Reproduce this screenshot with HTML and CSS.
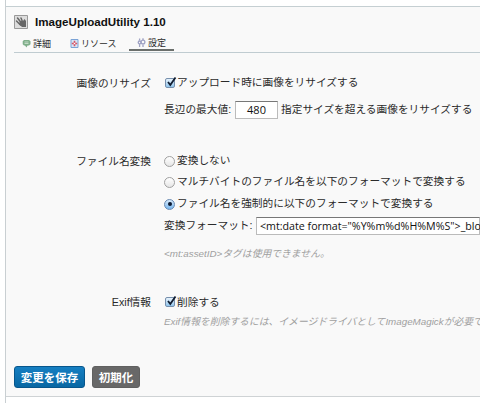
FILE: index.html
```html
<!DOCTYPE html>
<html lang="ja">
<head>
<meta charset="utf-8">
<title>ImageUploadUtility</title>
<link rel="stylesheet" href="styles.css">
</head>
<body>
<main class="list">
  <section class="plugin">
    <header class="heading">
      <svg class="plugin-icon" viewBox="0 0 14 14"><path fill="#ddd" stroke="#999" d="M.5.5h13v13H.5z"/><path fill="none" stroke="#666" stroke-width="1.5" stroke-linecap="round" d="M2.5 6l4 4M3.5 3l4 5M7 3l2 5"/><path fill="#666" d="M5 9l1-3 3 0 1.5-2L12 6v6H8z"/></svg>
      <h1>ImageUploadUtility 1.10</h1>
    </header>
    <nav class="tabs">
      <a class="tab detail"><svg class="tab-icon" viewBox="0 0 9 9"><path fill="#7fae8a" d="M2 1h5l1.5 1.2v3L7 6.5H5.5L4.5 8.5 3 6.5H2L.7 5.2v-3z"/><path stroke="#dcebdc" stroke-width=".7" d="M2.5 3h4M2.5 4.5h4"/></svg><span>詳細</span></a>
      <a class="tab resource"><svg class="tab-icon" viewBox="0 0 9 9"><path fill="#d8e6f6" stroke="#7ba3d6" d="M1 .5h7v8H1z"/><path stroke="#d65566" stroke-width="1.6" d="M1.8 4.5h5.4M4.5 1.8v5.4"/><circle cx="4.5" cy="4.5" r=".8" fill="#fff"/></svg><span>リソース</span></a>
      <a class="tab current"><svg class="tab-icon" viewBox="0 0 9 9"><g fill="none" stroke="#9fa2c4" stroke-width="1.3"><path d="M2.6 6v3M6 .2v2M6 6.5V9M2.6.5v2"/><circle cx="2.6" cy="4.4" r="1.4"/><circle cx="6" cy="4" r="1.9"/></g></svg><span>設定</span></a>
    </nav>
    <form class="settings">
      <div class="field resize">
        <div class="label">画像のリサイズ</div>
        <div class="content">
          <label class="row first"><span class="box"><svg viewBox="0 0 12 12"><path d="M3 6l2.3 3L10.5 1.5"/></svg></span><span>アップロード時に画像をリサイズする</span></label>
          <div class="row size"><span class="caption">長辺の最大値:</span><span class="input number">480</span><span>指定サイズを超える画像をリサイズする</span></div>
        </div>
      </div>
      <div class="field rename">
        <div class="label">ファイル名変換</div>
        <div class="content">
          <label class="row"><span class="radio"></span><span>変換しない</span></label>
          <label class="row"><span class="radio"></span><span>マルチバイトのファイル名を以下のフォーマットで変換する</span></label>
          <label class="row"><span class="radio on"></span><span>ファイル名を強制的に以下のフォーマットで変換する</span></label>
          <div class="row"><span class="format-caption">変換フォーマット:</span><span class="input format">&lt;mt:date format="%Y%m%d%H%M%S"&gt;_blo</span></div>
          <p class="hint">&lt;mt:assetID&gt;タグは使用できません。</p>
        </div>
      </div>
      <div class="field exif">
        <div class="label">Exif情報</div>
        <div class="content">
          <label class="row"><span class="box"><svg viewBox="0 0 12 12"><path d="M3 6l2.3 3L10.5 1.5"/></svg></span><span>削除する</span></label>
          <p class="hint">Exif情報を削除するには、イメージドライバとしてImageMagickが必要で</p>
        </div>
      </div>
      <div class="actions"><button type="button" class="save">変更を保存</button><button type="button" class="reset">初期化</button></div>
    </form>
  </section>
</main>
</body>
</html>
```
FILE: styles.css
```css
* { box-sizing: border-box; }
body {
  margin: 0;
  background: #fff;
  color: #2b2b2b;
  font: 10.7px "Liberation Sans", "Noto Sans CJK JP", sans-serif;
  overflow: hidden;
}
.list {
  height: 403px;
  margin-left: 5px;
  padding-top: 6px;
  border-left: 1px solid #c9cfd2;
  overflow: hidden;
  white-space: nowrap;
}
.plugin {
  height: 391px;
  padding-left: 8px;
  background: #f9f9f9;
  border-top: 1px solid #c5cfd2;
  border-bottom: 1px solid #cfd3d5;
}
.heading { display: flex; align-items: center; height: 29px; padding-top: 1px; }
.plugin-icon { width: 14px; height: 14px; margin-right: 7px; }
h1 { margin: 0; font-size: 11.6px; line-height: 16px; color: #111; }
.tabs { display: flex; height: 17px; border-bottom: 1px solid #c0ccd1; font-size: 9px; }
.tab { display: flex; align-items: center; height: 15px; line-height: 14px; }
.tab-icon { width: 9px; height: 9px; margin-right: 2px; }
.detail { width: 48px; padding-left: 8px; }
.resource { width: 67px; padding-left: 8px; }
.current { width: 45px; padding-left: 8px; border-bottom: 2px solid #6b6f6c; }
.settings { display: block; }
.field { display: flex; }
.label { flex: none; width: 137px; margin-right: 13px; text-align: right; line-height: 20px; }
.content { flex: 1; min-width: 0; }
.row { display: flex; align-items: center; height: 21.6px; line-height: 20px; }
.row > * { flex: none; }
.resize { height: 96px; padding-top: 19px; }
.resize .label { padding-top: 1px; }
.resize .first { height: 20px; }
.size { height: 20px; margin-top: 7px; }
.caption { width: 71px; }
.input {
  height: 18px;
  margin-top: 2px;
  border: 1px solid #bbb;
  border-top-color: #777;
  background: #fff;
  color: #111;
  font: 11px/16px "Open Sans", "Noto Sans", sans-serif;
}
.number { width: 43px; margin-right: 3px; text-align: center; }
.format-caption { width: 92px; }
.format { width: 224px; padding-left: 3px; font-size: 10.67px; }
.box {
  width: 10px;
  height: 10px;
  margin: 1px 2px 0 1px;
  border: 1px solid #7790ad;
  border-radius: 2px;
  background: linear-gradient(#e8f3fc, #91c5ec);
}
.box svg { display: block; width: 12px; height: 12px; margin: -3px 0 0 -1px; fill: none; stroke: #101c30; stroke-width: 1.8; }
.radio {
  display: grid;
  place-items: center;
  width: 11px;
  height: 11px;
  margin: 3px 2px 0 0;
  border: 1px solid #a0a0a0;
  border-radius: 50%;
  background: linear-gradient(#fff, #e6e6e6);
}
.on { border-color: #6889b2; background: linear-gradient(#d7eafb, #77b6ef); }
.on::before { content: ""; width: 4px; height: 4px; border-radius: 50%; background: #0b1830; }
.rename { height: 142px; }
.rename .label { padding-top: 2px; }
.hint { margin: 0; color: #a0a0a0; font-size: 9.8px; font-style: italic; line-height: 20px; }
.rename .hint { margin-top: 9px; }
.exif .hint { margin-top: -1px; }
.exif .label { padding-top: 1px; }
.actions { display: flex; gap: 7px; margin-top: 34px; }
.actions button {
  height: 22px;
  padding: 0;
  border: 1px solid #07568c;
  border-radius: 3px;
  color: #fff;
  font: bold 11.5px/18px "Noto Sans CJK JP", sans-serif;
}
.actions .save { width: 71px; background: linear-gradient(#167fc2, #0867a3); }
.actions .reset { width: 48px; border-color: #606060; background: #686868; }
```
